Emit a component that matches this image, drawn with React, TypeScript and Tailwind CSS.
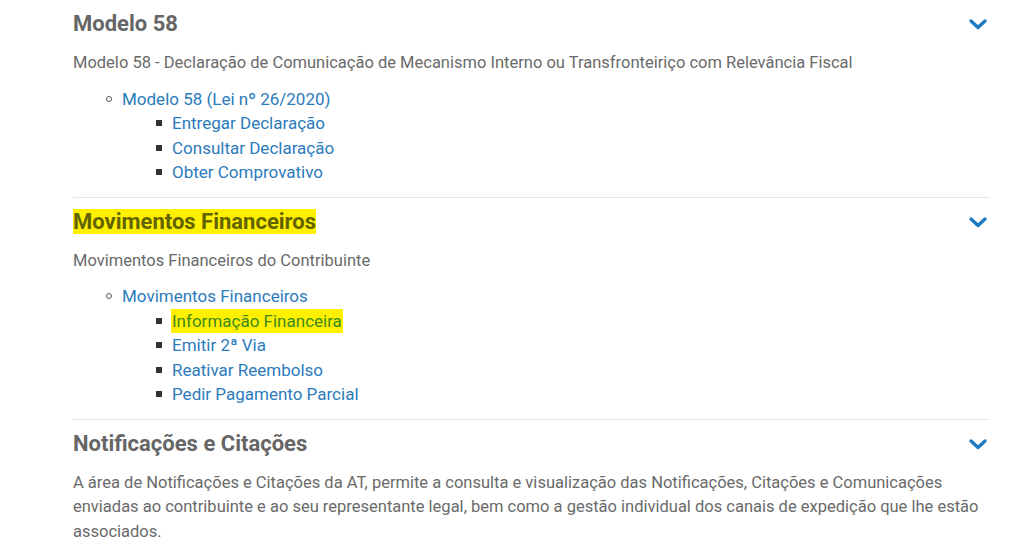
import React from 'react';

interface SubLink {
    label: string;
    highlight?: boolean;
}

interface Section {
    title: string;
    highlight?: boolean;
    description: string;
    group?: string;
    links?: SubLink[];
}

const sections: Section[] = [
    {
        title: 'Modelo 58',
        description: 'Modelo 58 - Declaração de Comunicação de Mecanismo Interno ou Transfronteiriço com Relevância Fiscal',
        group: 'Modelo 58 (Lei nº 26/2020)',
        links: [{ label: 'Entregar Declaração' }, { label: 'Consultar Declaração' }, { label: 'Obter Comprovativo' }],
    },
    {
        title: 'Movimentos Financeiros',
        highlight: true,
        description: 'Movimentos Financeiros do Contribuinte',
        group: 'Movimentos Financeiros',
        links: [
            { label: 'Informação Financeira', highlight: true },
            { label: 'Emitir 2ª Via' },
            { label: 'Reativar Reembolso' },
            { label: 'Pedir Pagamento Parcial' },
        ],
    },
    {
        title: 'Notificações e Citações',
        description:
            'A área de Notificações e Citações da AT, permite a consulta e visualização das Notificações, Citações e Comunicações enviadas ao contribuinte e ao seu representante legal, bem como a gestão individual dos canais de expedição que lhe estão associados.',
    },
];

function Chevron() {
    return (
        <svg width="20" height="14" viewBox="0 0 20 14" fill="none" stroke="#1f7bc1" strokeWidth="3.4" strokeLinecap="round" strokeLinejoin="round">
            <path d="M3 4l7 6.5L17 4" />
        </svg>
    );
}

function SectionBlock({ section, last }: { section: Section; last: boolean }) {
    return (
        <div className={`${last ? '' : 'border-b border-[#e6e6e6]'} pb-[12px]`}>
            <div className="flex items-center justify-between h-[48px]">
                <h3 className="text-[22px] font-bold text-[#666666] leading-[26px]">
                    <span className={section.highlight ? 'bg-[#fff000] text-[#636300]' : ''}>{section.title}</span>
                </h3>
                <span className="mr-[2px]">
                    <Chevron />
                </span>
            </div>
            <p className="text-[16.5px] text-[#6a6a6a] leading-[24.5px] mt-[3px]">{section.description}</p>
            {section.group && (
                <ul className="mt-[11px] pl-[33px] text-[17px] leading-[24.5px]">
                    <li className="flex flex-col">
                        <div className="flex items-center">
                            <span className="w-[6px] h-[6px] rounded-full border border-[#555] mr-[10px]" />
                            <a className="text-[#2b7bbd]">{section.group}</a>
                        </div>
                        <ul className="pl-[50px]">
                            {section.links?.map((l, i) => (
                                <li key={i} className="flex items-center">
                                    <span className="w-[6px] h-[6px] bg-[#333] mr-[9px]" />
                                    <a className={l.highlight ? 'text-[#3c8a1c] bg-[#fff000] px-[1px]' : 'text-[#2b7bbd] px-[1px]'}>{l.label}</a>
                                </li>
                            ))}
                        </ul>
                    </li>
                </ul>
            )}
        </div>
    );
}

export default function App() {
    return (
        <div className="w-[1024px] h-[542px] bg-white overflow-hidden" style={{ fontFamily: 'Roboto, "Noto Sans", sans-serif' }}>
            <div className="ml-[73px] w-[917px]">
                {sections.map((s, i) => (
                    <SectionBlock key={i} section={s} last={i === sections.length - 1} />
                ))}
            </div>
        </div>
    );
}
